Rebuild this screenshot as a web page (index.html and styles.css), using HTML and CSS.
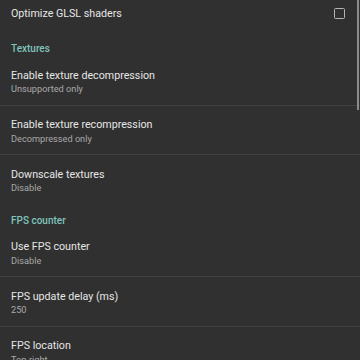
FILE: index.html
```html
<!DOCTYPE html>
<html>
<head>
<meta charset="utf-8">
<link rel="stylesheet" href="styles.css">
</head>
<body>
<div class="list">
  <div class="pref single">
    <div class="text"><div class="title">Optimize GLSL shaders</div></div>
    <div class="checkbox"></div>
  </div>
  <div class="category">Textures</div>
  <div class="pref">
    <div class="text"><div class="title">Enable texture decompression</div><div class="summary">Unsupported only</div></div>
  </div>
  <div class="divider"></div>
  <div class="pref">
    <div class="text"><div class="title">Enable texture recompression</div><div class="summary">Decompressed only</div></div>
  </div>
  <div class="divider"></div>
  <div class="pref">
    <div class="text"><div class="title">Downscale textures</div><div class="summary">Disable</div></div>
  </div>
  <div class="category">FPS counter</div>
  <div class="pref">
    <div class="text"><div class="title">Use FPS counter</div><div class="summary">Disable</div></div>
  </div>
  <div class="divider"></div>
  <div class="pref">
    <div class="text"><div class="title">FPS update delay (ms)</div><div class="summary">250</div></div>
  </div>
  <div class="divider"></div>
  <div class="pref">
    <div class="text"><div class="title">FPS location</div><div class="summary">Top-right</div></div>
  </div>
</div>
<div class="scrollbar"></div>
</body>
</html>
```
FILE: styles.css
```css
html, body {
  margin: 0;
  padding: 0;
  background: #303030;
  width: 360px;
  height: 360px;
  overflow: hidden;
}
body {
  font-family: Roboto, "Noto Sans", sans-serif;
}
.list {
  margin-top: -5px;
  display: flex;
  flex-direction: column;
}
.pref {
  display: flex;
  align-items: flex-start;
  height: 48.5px;
  box-sizing: border-box;
  padding: 12.5px 15px 0 11px;
}
.pref.single {
  height: 37px;
  padding-top: 0;
  align-items: center;
}
.text {
  flex: 1;
  display: flex;
  flex-direction: column;
}
.title {
  font-size: 10.7px;
  line-height: 13px;
  color: #e6e6e6;
}
.summary {
  font-size: 9.2px;
  line-height: 11px;
  margin-top: 1.5px;
  color: #a9a9a9;
}
.checkbox {
  width: 9px;
  height: 9px;
  border: 1.5px solid #b4b4b4;
  border-radius: 1.5px;
}
.category {
  height: 24px;
  box-sizing: border-box;
  padding: 11px 11px 0;
  font-size: 10px;
  line-height: 11px;
  font-weight: 500;
  color: #7fc4bb;
}
.divider {
  height: 1px;
  background: #414141;
}
.scrollbar {
  position: fixed;
  top: 0;
  right: 1px;
  width: 2px;
  height: 110px;
  background: #8c8c8c;
}
```
